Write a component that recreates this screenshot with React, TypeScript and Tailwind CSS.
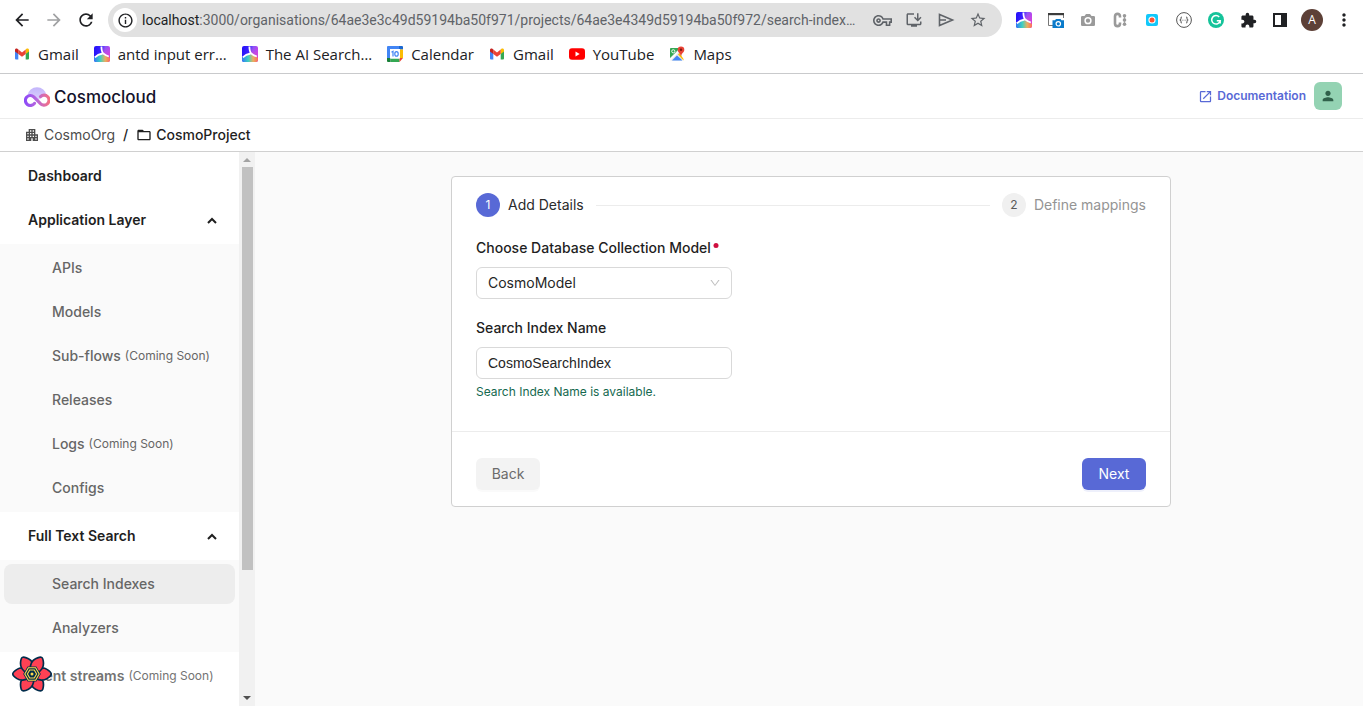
import React from "react";
import {
  MdApartment,
  MdArrowBack,
  MdArrowForward,
  MdExtension,
  MdFolderOpen,
  MdInfoOutline,
  MdMoreVert,
  MdOpenInNew,
  MdOutlineInstallDesktop,
  MdOutlineVpnKey,
  MdPerson,
  MdRefresh,
  MdStarBorder,
} from "react-icons/md";
import { AiOutlineDown } from "react-icons/ai";

const chromeFont = "font-['Open_Sans','Noto_Sans',sans-serif]";

function GmailIcon() {
  return (
    <svg viewBox="0 0 16 16" className="size-4" aria-hidden="true">
      <path d="M1 4v8.5a1 1 0 0 0 1 1h2.3V7z" fill="#4285f4" />
      <path d="M15 4v8.5a1 1 0 0 1-1 1h-2.3V7z" fill="#34a853" />
      <path d="M11.7 3.6V8L15 5.5V4c0-1.4-1.5-2-2.6-1.200z" fill="#fbbc04" />
      <path d="M4.300 8V3.600L8 6.400l3.700-2.800V8L8 10.800z" fill="#ea4335" />
      <path d="M1 4v1.500L4.300 8V3.600l-.7-.6C2.500 2.100 1 2.700 1 4z" fill="#c5221f" />
    </svg>
  );
}

function SearchAiIcon() {
  return (
    <svg viewBox="0 0 16 16" className="size-4" aria-hidden="true">
      <defs>
        <linearGradient id="ai-base" x1="0" y1="0" x2="1" y2="0.15">
          <stop offset="0" stopColor="#2410f8" />
          <stop offset="0.45" stopColor="#3a22ff" />
          <stop offset="0.7" stopColor="#8a55f5" />
          <stop offset="1" stopColor="#b844ee" />
        </linearGradient>
        <linearGradient id="ai-side" x1="0" y1="0" x2="0" y2="1">
          <stop offset="0" stopColor="#d04ce8" stopOpacity="0" />
          <stop offset="1" stopColor="#e040c8" />
        </linearGradient>
        <linearGradient id="ai-foot" x1="0" y1="0" x2="1" y2="0">
          <stop offset="0" stopColor="#2f7cf5" />
          <stop offset="0.4" stopColor="#3fd0c0" />
          <stop offset="0.7" stopColor="#e8b060" />
          <stop offset="1" stopColor="#ff6a5e" />
        </linearGradient>
      </defs>
      <rect width="16" height="16" rx="2" fill="url(#ai-base)" />
      <path d="M8 1h8v11H8z" fill="url(#ai-side)" />
      <path d="M0 11.500L8 8l8 4v2a2 2 0 0 1-2 2H2a2 2 0 0 1-2-2z" fill="url(#ai-foot)" />
      <path d="M7.400 .5c0 3.500.3 5.800 2.200 7.300 1.400 1.100 3.200 2 5.200 2.700M8.600 7.500C6.500 7.800 3 9 .800 11.300" stroke="#fff" strokeWidth="1.800" fill="none" />
    </svg>
  );
}

function CalendarIcon() {
  return (
    <svg viewBox="0 0 16 16" className="size-4" aria-hidden="true">
      <path d="M1 0h11v3.500H3.500V12H0V1a1 1 0 0 1 1-1z" fill="#4285f4" />
      <path d="M12 0h3a1 1 0 0 1 1 1v2.500h-4z" fill="#1967d2" />
      <path d="M12.500 3.500H16V12h-3.500z" fill="#fbbc04" />
      <path d="M3.500 12.500h9V16h-9z" fill="#34a853" />
      <path d="M0 12h3.500v4H1a1 1 0 0 1-1-1z" fill="#188038" />
      <path d="M12.500 12H16l-3.500 4z" fill="#ea4335" />
      <path d="M3 3h10v9.500H3z" fill="#fff" />
      <path d="M4.500 6.300L6 5.300v5.200" stroke="#4285f4" strokeWidth="1.200" fill="none" />
      <ellipse cx="9.500" cy="7.900" rx="1.700" ry="2.200" stroke="#4285f4" strokeWidth="1.200" fill="none" />
    </svg>
  );
}

function YouTubeIcon() {
  return (
    <svg viewBox="0 0 16 16" className="size-4" aria-hidden="true">
      <rect y="2.300" width="16" height="11.400" rx="3" fill="#f00" />
      <path d="M6.500 5.500v5l4.200-2.500z" fill="#fff" />
    </svg>
  );
}

function MapsIcon() {
  return (
    <svg viewBox="0 0 16 16" className="size-4" aria-hidden="true">
      <path d="M2 2h11v12.500H2a1 1 0 0 1-1-1V3a1 1 0 0 1 1-1z" fill="#e3e5e8" />
      <path d="M2 2h9L1 12V3a1 1 0 0 1 1-1z" fill="#34a853" />
      <path d="M3 14.500l5-5 5.500 5z" fill="#4285f4" />
      <path d="M1 12.800L10.500 3.500l1 1L1.500 14.500z" fill="#fff" />
      <path d="M9 8.500l1.500-1.500 4 6v1.500z" fill="#fbbc04" />
      <circle cx="4.300" cy="5.300" r="1.600" fill="none" stroke="#fff" strokeWidth=".9" />
      <path d="M12 .5a3.300 3.300 0 0 0-3.300 3.300C8.700 6.500 11.500 7 12 10.500c.5-3.500 3.300-4 3.300-6.700A3.300 3.300 0 0 0 12 .5z" fill="#ea4335" />
      <circle cx="12" cy="3.800" r="1.200" fill="#7d1812" />
    </svg>
  );
}

function SendIcon() {
  return (
    <svg viewBox="0 0 18 18" className="size-[18px]" aria-hidden="true">
      <path d="M2.500 3.500v11L15.500 9zM2.500 9H9" stroke="#5f6368" strokeWidth="1.600" fill="none" />
    </svg>
  );
}

function WindowShotIcon() {
  return (
    <svg viewBox="0 0 16 16" className="size-4" aria-hidden="true">
      <path d="M.5 1.500v12H5M15.500 1.500V6" stroke="#777" fill="none" />
      <path d="M0 1h16v2.200H0z" fill="#3c3c3c" />
      <path d="M4.500 8.300H7l1-1.300h4.500l1 1.300H16V16H4.500z" fill="#0b7bcb" />
      <circle cx="10.300" cy="11.800" r="2.200" stroke="#fff" strokeWidth="1.200" fill="none" />
    </svg>
  );
}

function CameraIcon() {
  return (
    <svg viewBox="0 0 16 16" className="size-4" aria-hidden="true">
      <path d="M2.200 4H4.500L6 2h4l1.500 2h2.300A1.200 1.200 0 0 1 15 5.200v7.600a1.200 1.200 0 0 1-1.200 1.200H2.200A1.200 1.200 0 0 1 1 12.800V5.200A1.200 1.200 0 0 1 2.200 4z" fill="#9a9a9a" />
      <circle cx="8" cy="8.700" r="2.900" fill="#9a9a9a" stroke="#fff" strokeWidth="1.500" />
    </svg>
  );
}

function ColumnCIcon() {
  return (
    <svg viewBox="0 0 16 16" className="size-4" aria-hidden="true">
      <path d="M8 5.500V4.500C8 2.700 7 1.900 5.500 1.900S3 2.700 3 4.500v7c0 1.800 1 2.600 2.500 2.600S8 13.300 8 11.500v-1" stroke="#9a9a9a" strokeWidth="2.600" fill="none" />
      <path d="M12.500 3.500v9" stroke="#aaa" strokeWidth="1.400" />
      <circle cx="12.500" cy="3.800" r="1.800" fill="#999" />
      <circle cx="12.500" cy="8" r="1.800" fill="#999" />
      <circle cx="12.500" cy="12.200" r="1.800" fill="#999" />
    </svg>
  );
}

function RecorderIcon() {
  return (
    <svg viewBox="0 0 16 16" className="size-4" aria-hidden="true">
      <rect x="2" y="2" width="12" height="12" rx="2" fill="#12c8fa" />
      <circle cx="8" cy="8" r="3.600" fill="#fff" />
      <circle cx="8" cy="8" r="2.500" fill="#ff5233" />
    </svg>
  );
}

function BracesIcon() {
  return (
    <svg viewBox="0 0 16 16" className="size-4" aria-hidden="true">
      <circle cx="8" cy="8" r="7.400" stroke="#555" fill="#fff" />
      <path d="M6 5c-1.200 0-1 .8-1 1.600S4.700 8 3.800 8c.9 0 1.200.6 1.200 1.400S4.800 11 6 11M10 5c1.200 0 1 .8 1 1.600s.3 1.400 1.200 1.400c-.9 0-1.200.6-1.200 1.400s.2 1.600-1 1.600" stroke="#444" fill="none" />
      <path d="M6.500 8.200h.8M8.700 8.200h.8" stroke="#555" />
    </svg>
  );
}

function GrammarIcon() {
  return (
    <svg viewBox="0 0 16 16" className="size-4" aria-hidden="true">
      <circle cx="8" cy="8" r="8" fill="#15c39a" />
      <path d="M11.200 4.900A4.300 4.300 0 1 0 12.200 8.800H8.800M12.200 8.800v2.700" stroke="#fff" strokeWidth="1.500" fill="none" />
    </svg>
  );
}

function SidePanelIcon() {
  return (
    <svg viewBox="0 0 16 16" className="size-4" aria-hidden="true">
      <path d="M2 2h11.500v12H2z" fill="none" stroke="#202124" strokeWidth="2" />
      <path d="M9 1h6v14H9z" fill="#202124" />
    </svg>
  );
}

function CosmoLogo() {
  return (
    <svg viewBox="0 0 26 20" className="h-5 w-[26px]" aria-hidden="true">
      <defs>
        <linearGradient id="loop" x1="0" y1="0" x2="26" y2="0" gradientUnits="userSpaceOnUse">
          <stop offset="0" stopColor="#8a48fa" />
          <stop offset="0.5" stopColor="#b968dc" />
          <stop offset="1" stopColor="#f8707c" />
        </linearGradient>
        <linearGradient id="dome" x1="0" y1="0" x2="0" y2="1">
          <stop offset="0" stopColor="#c3b5fb" />
          <stop offset="1" stopColor="#ddd3fd" />
        </linearGradient>
      </defs>
      <path d="M3.500 8.500a9.600 9.600 0 0 1 19 0L20 9l-7 5-7-5z" fill="url(#dome)" />
      <path
        d="M10.500 16.300A5 5 0 1 1 9.800 9.800L16.200 16.400A5 5 0 1 0 16.500 9.600"
        fill="none"
        stroke="url(#loop)"
        strokeWidth="3.100"
        strokeLinecap="round"
      />
    </svg>
  );
}

const petalAngles = [60, 120, 0, 180, 240, 300];

function QueryFlower() {
  return (
    <svg viewBox="-20 -19 40 38" className="h-[38px] w-10" aria-hidden="true">
      {petalAngles.map((angle) => (
        <path
          key={angle}
          d="M3 3.500C7 6.800 12 6.600 15 4.600 18 2.700 19.200 1 19.200 0S18 -2.700 15 -4.600C12 -6.600 7 -6.800 3 -3.500z"
          fill="#ff4154"
          stroke="#002c4b"
          strokeWidth="1.700"
          transform={`rotate(${angle})`}
        />
      ))}
      <path d="M-8.800 0L-4.400 -7.600H4.400L8.800 0 4.400 7.600H-4.400z" fill="#002c4b" />
      <path d="M-7.200 0L-3.600 -6.200H3.600L7.200 0 3.600 6.200H-3.600z" fill="none" stroke="#ffd94c" strokeWidth="1.100" />
      <path d="M-4.600 0L-2.300 -4H2.300L4.600 0 2.300 4H-2.300z" fill="none" stroke="#ffd94c" strokeWidth="1.100" />
      <circle r="1.500" fill="#ffd94c" />
    </svg>
  );
}

function ToolButton({ label, children }: { label: string; children: React.ReactNode }) {
  return (
    <button type="button" aria-label={label} className="flex size-8 shrink-0 items-center justify-center text-[#202124]">
      {children}
    </button>
  );
}

const bookmarks = [
  { name: "Gmail", icon: <GmailIcon /> },
  { name: "antd input err…", icon: <SearchAiIcon /> },
  { name: "The AI Search…", icon: <SearchAiIcon /> },
  { name: "Calendar", icon: <CalendarIcon /> },
  { name: "Gmail", icon: <GmailIcon /> },
  { name: "YouTube", icon: <YouTubeIcon /> },
  { name: "Maps", icon: <MapsIcon /> },
];

function BrowserBar() {
  return (
    <div className={`${chromeFont} shrink-0 border-b border-[#c9cacc] bg-white`}>
      <div className="flex h-10 items-center gap-1.5 pr-[3px] pl-1.5">
        <div className="flex">
          <ToolButton label="Back one page"><MdArrowBack className="size-5" /></ToolButton>
          <ToolButton label="Forward one page"><MdArrowForward className="size-5 text-[#a0a1a3]" /></ToolButton>
          <ToolButton label="Reload"><MdRefresh className="size-5" /></ToolButton>
        </div>
        <div className="flex h-[34px] min-w-0 flex-1 items-center rounded-full bg-[#e1e1e1] pr-2 pl-[5px] font-['Roboto',sans-serif] text-[14px]">
          <button type="button" aria-label="Site information" className="mr-[5px] flex size-6 shrink-0 items-center justify-center rounded-full bg-white">
            <MdInfoOutline className="size-[17px] text-[#202124]" />
          </button>
          <label htmlFor="address" className="text-[#202124]">localhost</label>
          <input
            id="address"
            className="min-w-0 flex-1 bg-transparent text-[#5f6368] outline-none"
            defaultValue=":3000/organisations/64ae3e3c49d59194ba50f971/projects/64ae3e4349d59194ba50f972/search-index…"
          />
          <ToolButton label="Passwords"><MdOutlineVpnKey className="size-[19px] text-[#5f6368]" /></ToolButton>
          <ToolButton label="Install app"><MdOutlineInstallDesktop className="size-[18px] text-[#5f6368]" /></ToolButton>
          <ToolButton label="Share"><SendIcon /></ToolButton>
          <ToolButton label="Bookmark"><MdStarBorder className="size-[18px] text-[#5f6368]" /></ToolButton>
        </div>
        <div className="flex items-center">
          <ToolButton label="AI search"><SearchAiIcon /></ToolButton>
          <ToolButton label="Window capture"><WindowShotIcon /></ToolButton>
          <ToolButton label="Camera"><CameraIcon /></ToolButton>
          <ToolButton label="Colours"><ColumnCIcon /></ToolButton>
          <ToolButton label="Recorder"><RecorderIcon /></ToolButton>
          <ToolButton label="JSON viewer"><BracesIcon /></ToolButton>
          <ToolButton label="Grammar"><GrammarIcon /></ToolButton>
          <ToolButton label="Extensions"><MdExtension className="size-[17px]" /></ToolButton>
          <ToolButton label="Side panel"><SidePanelIcon /></ToolButton>
          <ToolButton label="Profile">
            <span className="flex size-[22px] items-center justify-center rounded-full bg-[#5d4037] text-[12px] text-white">A</span>
          </ToolButton>
          <ToolButton label="Menu"><MdMoreVert className="size-5" /></ToolButton>
        </div>
      </div>
      <nav aria-label="Bookmarks" className="flex h-[33px] items-center gap-[15px] px-3.5 pb-1.5 text-[15px] text-[#202124]">
        {bookmarks.map((b, i) => (
          <a key={i} href="#" className="flex items-center gap-2 whitespace-nowrap">
            {b.icon}
            {b.name}
          </a>
        ))}
      </nav>
    </div>
  );
}

function SectionTitle({ children }: { children: React.ReactNode }) {
  return (
    <button type="button" className="my-1 flex h-10 w-full items-center justify-between pr-5 pl-7 font-semibold text-[#1f1f1f]">
      {children}
      <svg viewBox="0 0 16 16" className="size-4" aria-hidden="true">
        <path d="M5 11L9 7l4 4" fill="none" stroke="currentColor" strokeWidth="2" />
      </svg>
    </button>
  );
}

function SubItem({ label, soon, active }: { label: string; soon?: boolean; active?: boolean }) {
  return (
    <a
      href="#"
      className={`mx-1 flex h-10 items-center gap-1 rounded-lg pl-12 font-medium text-[#666] ${active ? "bg-[#ededed]" : ""}`}
    >
      {label}
      {soon && <span className="text-[12px] font-normal">(Coming Soon)</span>}
    </a>
  );
}

function Sidebar() {
  return (
    <aside className="flex w-[255px] shrink-0 bg-white">
      <nav aria-label="Project" className="min-w-0 flex-1 overflow-hidden text-[14px] whitespace-nowrap">
        <a href="#" className="my-1 flex h-10 items-center pl-7 font-semibold text-[#1f1f1f]">Dashboard</a>
        <SectionTitle>Application Layer</SectionTitle>
        <div className="flex flex-col gap-1 bg-[#fafafa] py-1">
          <SubItem label="APIs" />
          <SubItem label="Models" />
          <SubItem label="Sub-flows" soon />
          <SubItem label="Releases" />
          <SubItem label="Logs" soon />
          <SubItem label="Configs" />
        </div>
        <SectionTitle>Full Text Search</SectionTitle>
        <div className="flex flex-col gap-1 bg-[#fafafa] py-1">
          <SubItem label="Search Indexes" active />
          <SubItem label="Analyzers" />
        </div>
        <a href="#" className="my-1 flex h-10 items-center gap-1 pl-7 font-semibold text-[#737373]">
          Event streams
          <span className="text-[12px] font-normal">(Coming Soon)</span>
        </a>
      </nav>
      <div className="flex w-4 flex-col items-center bg-[#f1f1f1]" aria-hidden="true">
        <div className="flex h-[15px] items-center">
          <svg viewBox="0 0 8 4" className="h-1 w-2"><path d="M0 4l4-4 4 4z" fill="#a3a3a3" /></svg>
        </div>
        <div className="w-[11px] grow-[403] bg-[#c1c1c1]" />
        <div className="grow-[120]" />
        <div className="flex h-4 items-center">
          <svg viewBox="0 0 8 4" className="h-1 w-2"><path d="M0 0l4 4 4-4z" fill="#505050" /></svg>
        </div>
      </div>
    </aside>
  );
}

function DetailsCard() {
  return (
    <form className="w-full max-w-[720px] rounded border border-[#d0d0d0] bg-white" onSubmit={(e) => e.preventDefault()}>
      <div className="px-6 pt-4 pb-[30px]">
        <ol className="flex items-center text-[14px]">
          <li className="flex items-center gap-2 text-[#2b2b2b]">
            <span className="flex size-6 items-center justify-center rounded-full bg-[#5869d6] text-[12px] leading-6 text-white">1</span>
            Add Details
          </li>
          <li aria-hidden="true" className="mx-3 h-px flex-1 bg-[#ececec]" />
          <li className="flex items-center gap-2 text-[#949494]">
            <span className="flex size-6 items-center justify-center rounded-full bg-[#f0f0f0] text-[12px] leading-6 text-[#595959]">2</span>
            Define mappings
          </li>
        </ol>

        <div className="mt-5 flex w-64 flex-col text-[14px]">
          <label htmlFor="model" className="flex gap-0.5 font-medium whitespace-nowrap text-[#1f1f1f]">
            Choose Database Collection Model
            <svg viewBox="0 0 6 22" className="h-[22px] w-1.5" aria-hidden="true"><circle cx="3" cy="8.500" r="2.500" fill="#cf1040" /></svg>
          </label>
          <div className="mt-2 grid items-center">
            <select
              id="model"
              className="col-start-1 row-start-1 h-8 w-full appearance-none rounded-md border border-[#d9d9d9] bg-white px-[11px] text-[#262626]"
            >
              <option>CosmoModel</option>
            </select>
            <AiOutlineDown className="pointer-events-none col-start-1 row-start-1 mr-[11px] size-3 justify-self-end text-[#bfbfbf]" aria-hidden="true" />
          </div>

          <label htmlFor="index-name" className="mt-[18px] font-medium text-[#1f1f1f]">Search Index Name</label>
          <input
            id="index-name"
            defaultValue="CosmoSearchIndex"
            className="mt-2 h-8 rounded-md border border-[#d9d9d9] bg-white px-[11px] font-['Liberation_Sans',Arial,sans-serif] text-[#262626]"
          />
          <p className="mt-1 text-[12px] leading-[18px] text-[#15694f]">Search Index Name is available.</p>
        </div>
      </div>
      <div className="flex justify-between border-t border-[#ececec] px-6 pt-[26px] pb-4 text-[14px]">
        <button type="button" className="h-8 w-16 rounded-md bg-[#f3f3f3] text-[#6b6b6b] shadow-[0_2px_0_rgba(0,0,0,0.02)]">Back</button>
        <button type="submit" className="h-8 w-16 rounded-md bg-[#5869d6] text-white shadow-[0_2px_0_rgba(88,105,214,0.1)]">Next</button>
      </div>
    </form>
  );
}

export default function App() {
  return (
    <div className="flex h-screen flex-col overflow-hidden bg-[#fafafa] font-['Inter',sans-serif] leading-[22px]">
      <BrowserBar />
      <header className="flex h-[45px] shrink-0 items-center justify-between border-b border-[#ececec] bg-white pr-[21px] pl-6">
        <a href="#" className="flex items-center gap-1 pt-0.5 text-[17px] font-medium text-[#14122b]">
          <CosmoLogo />
          Cosmocloud
        </a>
        <div className="flex items-center gap-2">
          <a href="#" className="flex items-center gap-1 text-[12px] font-semibold text-[#5869d6]">
            <MdOpenInNew className="size-[15px]" aria-hidden="true" />
            Documentation
          </a>
          <button type="button" aria-label="Account" className="flex size-7 items-center justify-center rounded-md bg-[#94d3b3] text-[#30614a]">
            <MdPerson className="size-4" />
          </button>
        </div>
      </header>
      <nav aria-label="Breadcrumb" className="flex h-[33px] shrink-0 items-center gap-2 border-b border-[#d0d0d0] bg-white px-6 text-[14px] text-[#1f1f1f]">
        <a href="#" className="flex items-center gap-1 text-[#4d4d4d]">
          <MdApartment className="size-4" aria-hidden="true" />
          CosmoOrg
        </a>
        <span className="font-medium">/</span>
        <a href="#" className="flex items-center gap-1 font-medium">
          <MdFolderOpen className="size-4" aria-hidden="true" />
          CosmoProject
        </a>
      </nav>
      <div className="flex min-h-0 flex-1">
        <Sidebar />
        <main className="flex min-w-0 flex-1 items-start justify-center pt-6 pl-1">
          <DetailsCard />
        </main>
      </div>
      <button type="button" aria-label="Open query tools" className="fixed bottom-[13px] left-3">
        <QueryFlower />
      </button>
    </div>
  );
}
